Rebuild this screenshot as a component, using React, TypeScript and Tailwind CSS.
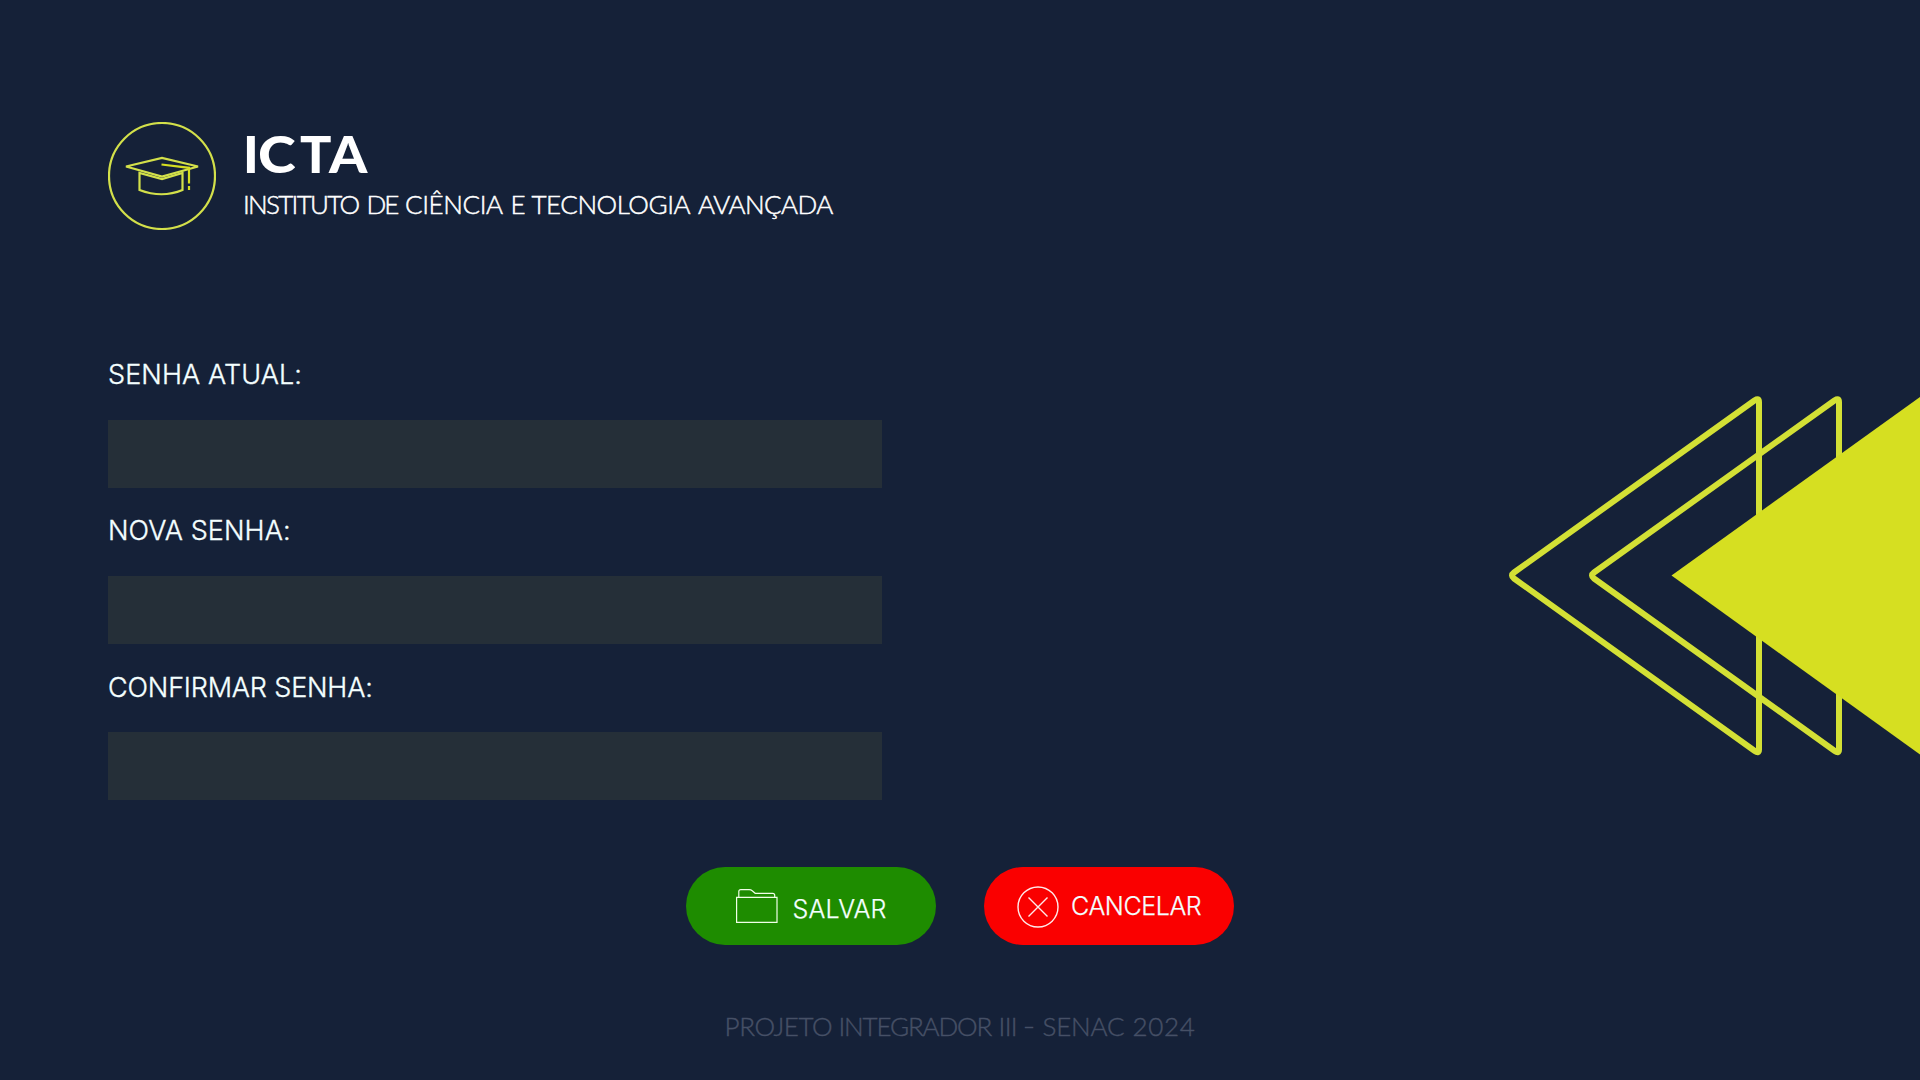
const FIELDS = [
  { id: "atual", label: "SENHA ATUAL:", style: "leading-[85px] tracking-[0.100px]" },
  { id: "nova", label: "NOVA SENHA:", style: "leading-[85px] tracking-[0.100px]" },
  { id: "confirmar", label: "CONFIRMAR SENHA:", style: "leading-[87px] tracking-[-0.170px]" },
];

const SUBTITLE = [
  { word: "INSTITUTO", style: "w-[123.500px] tracking-[-1.700px]" },
  { word: "DE", style: "w-[38.500px] tracking-[-2px]" },
  { word: "CIÊNCIA", style: "w-[105.500px] tracking-[-0.400px]" },
  { word: "E", style: "w-[21px]" },
  { word: "TECNOLOGIA", style: "w-[166.500px] tracking-[-0.450px]" },
  { word: "AVANÇADA", style: "tracking-[-0.550px]" },
];

const FOOTER = [
  { word: "PROJETO", style: "w-[114px] tracking-[-0.400px]" },
  { word: "INTEGRADOR", style: "w-[160px] tracking-[-1.150px]" },
  { word: "III", style: "w-[25px] tracking-[-0.600px]" },
  { word: "–", style: "w-[19px] text-[19px] [-webkit-text-stroke:0.800px]" },
  { word: "SENAC", style: "w-[90px] tracking-[-0.200px]" },
  { word: "2024", style: "w-[63px] tracking-[0.700px]" },
];

function CapLogo() {
  return (
    <svg className="h-[108px] w-[108px]" viewBox="0 0 108 108" fill="none" stroke="#d3e04a">
      <circle cx="54" cy="54" r="53" strokeWidth="2.200" />
      <path d="M18 44.500 54 36l36 8.500L54 54.500Z" strokeWidth="2.200" />
      <path d="M31.500 51v17q22.500 8.500 43 0V51L54 57Z" strokeWidth="2.200" />
      <path d="M53.500 42.500 81 45.800V61.500M81 64v4" stroke="#d6df21" strokeWidth="2.200" />
    </svg>
  );
}

function FolderIcon() {
  return (
    <svg className="h-9 w-[42px]" viewBox="0 0 42 36" fill="none" stroke="#f1ffe8" strokeWidth="1.200">
      <path d="M.6 9.400h40.400v25H.6Z" />
      <path d="M2.800 9V3.500Q2.800 1.700 4.800 1.700h8.400q1.800 0 3 1l3 2.600h17.500q2 0 2 2V9" />
    </svg>
  );
}

function CloseIcon() {
  return (
    <svg className="mt-px h-[42px] w-[42px]" viewBox="0 0 42 42" fill="none" stroke="#ffeaea" strokeWidth="1.400">
      <circle cx="21" cy="21" r="20" />
      <path d="m11.500 11.500 19 19m0-19-19 19" />
    </svg>
  );
}

function Triangles() {
  return (
    <svg className="absolute top-[390px] right-0 h-[370px] w-[420px]" viewBox="1500 390 420 370">
      <g fill="none" stroke="#d3e035" strokeWidth="6" strokeLinejoin="round">
        <path d="M1754.800 400.200Q1759 397.600 1759 402V749.500Q1759 754 1754.800 751L1514 578.500Q1510 575.500 1514 572.500Z" />
        <path d="M1834.800 400.200Q1839 397.600 1839 402V749.500Q1839 754 1834.800 751L1594 578.500Q1590 575.500 1594 572.500Z" />
      </g>
      <path d="M1671.500 575.500 1920 397V754.500Z" fill="#d6df21" />
    </svg>
  );
}

export default function App() {
  return (
    <main className="relative flex h-[1080px] w-[1920px] flex-col overflow-hidden bg-[#152138] pt-[122px] font-['Inter',sans-serif] text-[#f4ffff]">
      <Triangles />
      <header className="flex h-[108px] gap-[27px] pl-[108px]">
        <CapLogo />
        <div className="flex flex-col whitespace-nowrap font-['Lato',sans-serif] text-white">
          <h1 className="flex h-[60px] text-[52px] leading-[62px] font-black">
            <span className="w-[15px]">I</span>
            <span className="mr-[6px] w-[36px] origin-left scale-x-110">C</span>
            <span className="w-[29px]">T</span>
            <span className="origin-left scale-x-[1.05]">A</span>
          </h1>
          <p className="flex text-[26px] leading-[44px] font-light [-webkit-text-stroke:0.500px]">
            {SUBTITLE.map((s) => (
              <span key={s.word} className={s.style}>{s.word}</span>
            ))}
          </p>
        </div>
      </header>
      <form className="flex flex-1 flex-col" onSubmit={(e) => e.preventDefault()}>
        <div className="mt-[102px] ml-[108px] flex w-[774.400px] flex-col">
          {FIELDS.map((f) => (
            <div key={f.id} className="flex flex-col">
              <label htmlFor={f.id} className={`h-[88px] text-[27px] font-light [-webkit-text-stroke:0.350px] ${f.style}`}>
                {f.label}
              </label>
              <input id={f.id} type="password" className="h-[68px] bg-[#252f38] px-4 outline-none" />
            </div>
          ))}
        </div>
        <div className="mt-[67px] flex justify-center gap-12">
          <button className="flex h-[78px] w-[250px] items-center rounded-full bg-[#1e8c00] pl-[49.500px] text-[25px] font-light [-webkit-text-stroke:0.250px]">
            <FolderIcon />
            <span className="mt-[8px] ml-[15px] tracking-[0.200px]">SALVAR</span>
          </button>
          <button className="flex h-[78px] w-[250px] items-center rounded-full bg-[#fa0000] pl-[32.500px] text-[25px] font-light [-webkit-text-stroke:0.250px]">
            <CloseIcon />
            <span className="mt-[2px] ml-[12.500px] tracking-[-0.400px]">CANCELAR</span>
          </button>
        </div>
      </form>
      <footer className="flex h-[80px] justify-center font-['Lato',sans-serif] text-[26px] leading-[52px] font-light whitespace-nowrap text-[#465066] [-webkit-text-stroke:0.400px]">
        {FOOTER.map((s) => (
          <span key={s.word} className={s.style}>{s.word}</span>
        ))}
      </footer>
    </main>
  );
}
